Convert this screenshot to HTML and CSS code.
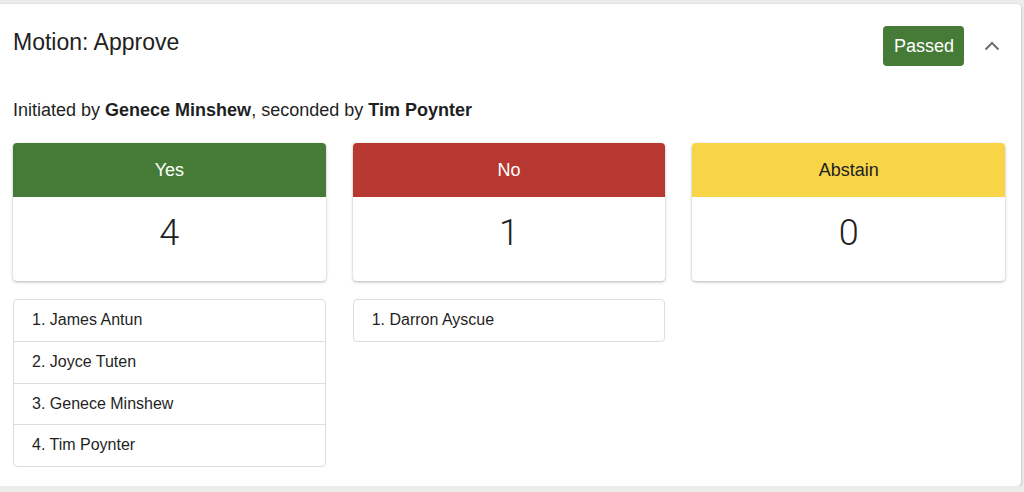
FILE: index.html
```html
<!DOCTYPE html>
<html lang="en">
<head>
<meta charset="utf-8">
<title>Motion: Approve</title>
<link rel="stylesheet" href="styles.css">
</head>
<body>
<section class="card">
  <header class="card-header">
    <h2 class="title">Motion: Approve</h2>
    <span class="badge">Passed</span>
    <button class="toggle" aria-label="Collapse">
      <svg width="24" height="24" viewBox="0 0 24 24"><path d="M5.5 15.5 L12 9 L18.5 15.5" fill="none" stroke="#6f6f6f" stroke-width="2"/></svg>
    </button>
  </header>
  <p class="initiated">Initiated by <b>Genece Minshew</b>, seconded by <b>Tim Poynter</b></p>
  <div class="votes">
    <div class="tally">
      <div class="tally-head yes">Yes</div>
      <div class="tally-count">4</div>
    </div>
    <div class="tally">
      <div class="tally-head no">No</div>
      <div class="tally-count">1</div>
    </div>
    <div class="tally">
      <div class="tally-head abstain">Abstain</div>
      <div class="tally-count">0</div>
    </div>
    <ul class="voters">
      <li>1. James Antun</li>
      <li>2. Joyce Tuten</li>
      <li>3. Genece Minshew</li>
      <li>4. Tim Poynter</li>
    </ul>
    <ul class="voters">
      <li>1. Darron Ayscue</li>
    </ul>
  </div>
</section>
</body>
</html>
```

FILE: styles.css
```css
html, body {
  margin: 0;
  padding: 0;
}
body {
  background: #ececec;
  padding-top: 4px;
  font-family: "Liberation Sans", Arial, sans-serif;
  color: #1f1f1f;
}
.card {
  width: 1021px;
  box-sizing: border-box;
  background: #fff;
  border-radius: 0 4px 4px 0;
  box-shadow: 0 1px 3px rgba(0, 0, 0, 0.28);
  padding: 22px 16px 19px 13px;
}
.card-header {
  display: flex;
  align-items: flex-start;
  height: 40px;
}
.title {
  flex: 1;
  margin: 0;
  font-size: 23px;
  line-height: 33px;
  font-weight: 400;
  color: #222;
}
.badge {
  height: 40px;
  line-height: 40px;
  padding: 0 10px 0 11px;
  border-radius: 4px;
  background: #467a37;
  color: #fff;
  font-size: 18px;
}
.toggle {
  align-self: center;
  width: 24px;
  height: 24px;
  margin: 0 1px 0 16px;
  padding: 0;
  border: 0;
  background: none;
  display: flex;
}
.initiated {
  margin: 32px 0 21px;
  font-size: 18px;
  line-height: 24px;
  color: #1f1f1f;
}
.initiated b {
  font-weight: 700;
}
.votes {
  display: grid;
  grid-template-columns: repeat(3, 1fr);
  column-gap: 27px;
  row-gap: 18px;
  align-items: start;
}
.tally {
  border-radius: 4px;
  overflow: hidden;
  background: #fff;
  box-shadow: 0 1px 3px rgba(0, 0, 0, 0.3);
}
.tally-head {
  height: 54px;
  line-height: 54px;
  text-align: center;
  font-size: 18px;
  color: #fff;
}
.tally-head.yes { background: #467a37; }
.tally-head.no { background: #b73830; }
.tally-head.abstain { background: #f8d547; color: #222; }
.tally-count {
  height: 84px;
  box-sizing: border-box;
  padding-top: 16px;
  text-align: center;
  font-family: Roboto, "Liberation Sans", sans-serif;
  font-weight: 300;
  font-size: 36px;
  line-height: 40px;
  color: #222;
}
.voters {
  list-style: none;
  margin: 0;
  padding: 0;
  border: 1px solid #dedede;
  border-radius: 4px;
}
.voters li {
  padding: 10px 18px;
  line-height: 20.75px;
  font-size: 16px;
  color: #1f1f1f;
  border-bottom: 1px solid #dedede;
}
.voters li:last-child {
  border-bottom: 0;
}
```
